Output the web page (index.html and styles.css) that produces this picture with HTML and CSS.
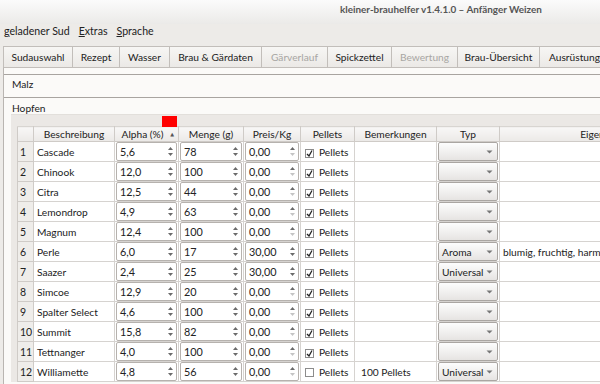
FILE: index.html
```html
<!DOCTYPE html>
<html lang="de">
<head>
    <meta charset="UTF-8">
    <title>kleiner-brauhelfer</title>
    <link rel="stylesheet" href="styles.css">
</head>
<body>
    <div class="titlebar"><span class="title">kleiner-brauhelfer v1.4.1.0 – Anfänger Weizen</span></div>
    <div class="menubar">
        <span><u>g</u>eladener Sud</span>
        <span><u>E</u>xtras</span>
        <span><u>S</u>prache</span>
    </div>
    <div class="tabbar">
        <div class="tab w-sud">Sudauswahl</div>
        <div class="tab w-rez">Rezept</div>
        <div class="tab w-was">Wasser</div>
        <div class="tab w-brau">Brau &amp; Gärdaten</div>
        <div class="tab w-gaer disabled">Gärverlauf</div>
        <div class="tab w-spick">Spickzettel</div>
        <div class="tab w-bew disabled">Bewertung</div>
        <div class="tab w-ueb">Brau-Übersicht</div>
        <div class="tab w-aus">Ausrüstung</div>
    </div>
    <div class="pane">
        <div class="group">Malz</div>
        <div class="group">Hopfen</div>
        <div class="tableframe">
            <div class="sort-marker"></div>
            <table class="hops">
                <colgroup>
                    <col class="c-num"><col class="c-name"><col class="c-alpha"><col class="c-menge">
                    <col class="c-preis"><col class="c-pel"><col class="c-bem"><col class="c-typ"><col class="c-eig">
                </colgroup>
                <thead>
                    <tr>
                        <th></th>
                        <th>Beschreibung</th>
                        <th class="sorted">Alpha (%)<span class="sort-arrow">▲</span></th>
                        <th>Menge (g)</th>
                        <th>Preis/Kg</th>
                        <th>Pellets</th>
                        <th>Bemerkungen</th>
                        <th>Typ</th>
                        <th>Eigenschaften</th>
                    </tr>
                </thead>
                <tbody id="rows"></tbody>
            </table>
        </div>
    </div>
    <script src="app.js"></script>
</body>
</html>
```

FILE: app.js
```js
var hops = [
    ["Cascade", "5,6", "78", "0,00", true, "", "", ""],
    ["Chinook", "12,0", "100", "0,00", true, "", "", ""],
    ["Citra", "12,5", "44", "0,00", true, "", "", ""],
    ["Lemondrop", "4,9", "63", "0,00", true, "", "", ""],
    ["Magnum", "12,4", "100", "0,00", true, "", "", ""],
    ["Perle", "6,0", "17", "30,00", true, "", "Aroma", "blumig, fruchtig, harmonisch"],
    ["Saazer", "2,4", "25", "30,00", true, "", "Universal", ""],
    ["Simcoe", "12,9", "20", "0,00", true, "", "", ""],
    ["Spalter Select", "4,6", "100", "0,00", true, "", "", ""],
    ["Summit", "15,8", "82", "0,00", true, "", "", ""],
    ["Tettnanger", "4,0", "100", "0,00", true, "", "", ""],
    ["Williamette", "4,8", "56", "0,00", false, "100 Pellets", "Universal", ""]
];

function spin(value, zero) {
    return '<div class="spin"><span class="val">' + value + '</span>' +
        '<span class="arrows"><svg width="7" height="13" viewBox="0 0 7 13">' +
        '<path d="M3.5 2 L6 5 L1 5 Z" fill="#6a6a6a"/>' +
        '<path d="M1 8 L6 8 L3.5 11 Z" fill="' + (zero ? '#c4c4c4' : '#6a6a6a') + '"/>' +
        '</svg></span></div>';
}

var html = "";
hops.forEach(function (h, i) {
    html += '<tr>' +
        '<td class="num">' + (i + 1) + '</td>' +
        '<td class="name">' + h[0] + '</td>' +
        '<td class="sp">' + spin(h[1], false) + '</td>' +
        '<td class="sp">' + spin(h[2], false) + '</td>' +
        '<td class="sp">' + spin(h[3], h[3] === "0,00") + '</td>' +
        '<td class="pel"><span class="check">' + (h[4] ? '<svg width="7" height="7" viewBox="0 0 7 7"><path d="M1 4 L3 6 L6 0.5" stroke="#222" stroke-width="1.3" fill="none"/></svg>' : '') + '</span>Pellets</td>' +
        '<td class="bem">' + h[5] + '</td>' +
        '<td class="typ"><div class="combo"><span>' + h[6] + '</span><svg width="7" height="4" viewBox="0 0 7 4"><path d="M0.5 0.5 L6.5 0.5 L3.5 3.5 Z" fill="#777"/></svg></div></td>' +
        '<td class="eig">' + h[7] + '</td>' +
        '</tr>';
});
document.getElementById("rows").innerHTML = html;
```

FILE: styles.css
```css
html, body { margin: 0; padding: 0; }
body { width: 600px; height: 384px; overflow: hidden; background-color: #edebe8; font-family: Lato, "DejaVu Sans", sans-serif; font-size: 10.2px; line-height: 14px; color: #222; }
.titlebar { height: 24px; background: linear-gradient(#fbfbfb, #ebeae8); }
.title { display: inline-block; padding-left: 340px; padding-top: 2px; color: #555; font-weight: bold; font-size: 9.9px; }
.menubar { display: flex; gap: 9px; padding: 0 0 0 4px; height: 20px; font-size: 10.6px; }
.menubar u { text-decoration: underline; }
.tabbar { display: flex; margin: 2px 0 0 3px; height: 21px; white-space: nowrap; }
.tab { flex: none; box-sizing: border-box; height: 21px; padding-top: 3px; text-align: center; border: 1px solid #c2beba; border-left: none; border-bottom: none; background: linear-gradient(#f7f6f4, #ebe9e6); }
.tab:first-child { border-left: 1px solid #c2beba; }
.tab.disabled { color: #a8a6a3; }
.w-sud { width: 70px; } .w-rez { width: 47px; } .w-was { width: 50px; } .w-brau { width: 92px; }
.w-gaer { width: 66px; } .w-spick { width: 64px; } .w-bew { width: 66px; } .w-ueb { width: 82px; } .w-aus { width: 70px; }
.pane { margin-left: 3px; border-left: 1px solid #b9b5b1; border-top: 1px solid #c2beba; background-color: #fbfaf8; height: 320px; padding-top: 6px; }
.group { box-sizing: border-box; height: 23px; border-top: 1px solid #a8a4a0; padding: 2px 0 0 8px; }
.group + .group { height: 17px; padding-top: 3px; }
.tableframe { position: relative; margin-left: 7px; background-color: #ebe8e5; padding: 11px 0 0 6px; border-top: 1px solid #e2dfdb; }
.sort-marker { position: absolute; left: 151px; top: 1px; width: 15px; height: 15px; background-color: #ff0000; }
.hops { border-collapse: collapse; table-layout: fixed; width: 706px; background-color: #fff; }
.c-num { width: 16px; } .c-name { width: 81px; } .c-alpha { width: 64px; } .c-menge { width: 65px; }
.c-preis { width: 57px; } .c-pel { width: 54px; } .c-bem { width: 82px; } .c-typ { width: 63px; } .c-eig { width: 224px; }
.hops th { height: 14px; padding: 0; font-weight: normal; background: linear-gradient(#f8f7f6, #ebe9e7); border: 1px solid #cfcbc7; border-top: 1px solid #d8d5d1; white-space: nowrap; }
.hops th.sorted { position: relative; padding-right: 8px; }
.sort-arrow { position: absolute; right: 4px; top: 0; font-size: 5px; color: #555; }
.hops td { height: 19px; padding: 0; border: 1px solid #d6d3d0; white-space: nowrap; overflow: hidden; }
.hops td.num { background-color: #efedea; padding-left: 2px; border-color: #cfcbc7; font-size: 10.5px; }
.hops td.name { padding-left: 3px; }
.hops td.sp { padding: 0 1px; }
.spin { display: flex; align-items: center; height: 17px; border: 1px solid #b6b2ae; border-radius: 2px; background-color: #fff; font-size: 10.8px; }
.spin .val { flex: 1; padding-left: 3px; }
.spin .arrows { display: flex; width: 8px; padding-right: 1px; }
.hops td.pel { padding-left: 4px; }
.check { display: inline-block; box-sizing: border-box; width: 9px; height: 9px; margin-right: 5px; vertical-align: -1px; border: 1px solid #8c8c8c; background-color: #fff; line-height: 0; }
.hops td.bem { padding-left: 6px; }
.hops td.typ { padding: 0 1px; }
.combo { display: flex; align-items: center; justify-content: space-between; height: 17px; padding: 0 4px 0 3px; border: 1px solid #aaa6a2; border-radius: 2px; background: linear-gradient(#fdfdfd, #e6e4e2); }
.hops td.eig { padding-left: 3px; }
```
